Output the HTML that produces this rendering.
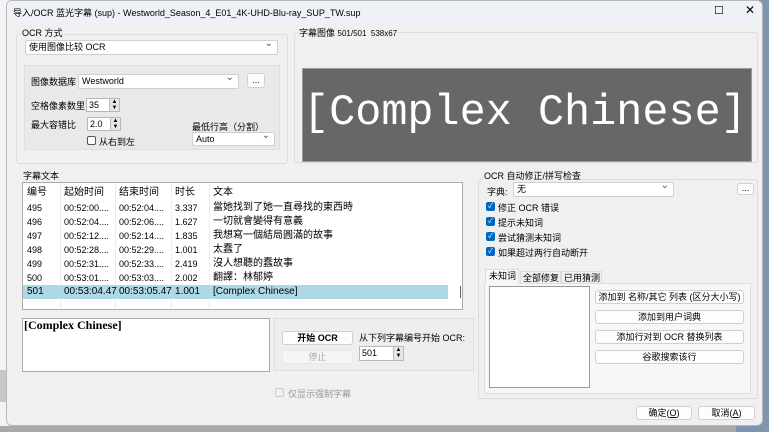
<!DOCTYPE html>
<html><head><meta charset="utf-8"><style>
*{box-sizing:border-box;margin:0;padding:0}
body{width:769px;height:432px;overflow:hidden;position:relative;background:#e9e9e9;font-family:"Liberation Sans","Noto Sans CJK SC",sans-serif;font-size:9px;color:#000}
.a{position:absolute}
.win{left:6px;top:0;width:757px;height:426px;background:#f0f0f0;border:1px solid #b8b8b8;border-radius:6px;overflow:hidden}
.grp{position:absolute;border:1px solid #dcdcdc;border-radius:3px}
.lbl{position:absolute;background:#f0f0f0;padding:0 1px;white-space:nowrap}
.cb{position:absolute;background:#fff;border:1px solid #d0d0d0;border-radius:2px;padding-left:3px;line-height:12px;white-space:nowrap}
.cb:after{content:"⌄";position:absolute;right:4px;top:-3px;color:#555;font-size:10px}
.btn{position:absolute;background:#fdfdfd;border:1px solid #d0d0d0;border-radius:3px;text-align:center;line-height:12px;white-space:nowrap}
.spin{position:absolute;background:#fff;border:1px solid #b8b8b8;padding-left:2px;line-height:12px}
.spin i{position:absolute;right:0;top:0;width:10px;height:100%;background:#e6e6e6;border-left:1px solid #bbb;font-style:normal;font-size:6px;line-height:6px;text-align:center}
.chk{position:absolute;width:9px;height:9px;border-radius:2px;background:#0067c0;color:#fff;font-size:7px;line-height:9px;text-align:center}
.row{position:absolute;left:0;width:425px;height:14px;line-height:14px;white-space:nowrap}
.row span{position:absolute;top:0;overflow:hidden}
.c1{left:4px;width:33px}.c2{left:41px;width:55px}.c3{left:96px;width:56px}.c4{left:152px;width:38px}.c5{left:190px;font-size:10px}
.vl{position:absolute;top:0;width:1px;height:126px;background:#ececec}
</style></head><body>
<div class="a" style="left:0;top:0;width:8px;height:432px;background:#f3f3f3"></div>
<div class="a" style="left:0;top:370px;width:8px;height:32px;background:#c8c8c8"></div>
<div class="a" style="left:0;top:426px;width:769px;height:6px;background:#a9a9a9"></div>
<div class="a" style="left:736px;top:0;width:33px;height:432px;background:#7f94ad"></div>
<div class="win a">
 <div class="a" style="left:0;top:0;width:757px;height:22px;background:#eef1f6"></div>
 <div class="a" style="left:6px;top:5px;font-size:9px;white-space:nowrap">导入/OCR 蓝光字幕 (sup) - Westworld_Season_4_E01_4K-UHD-Blu-ray_SUP_TW.sup</div>
 <div class="a" style="left:707px;top:3px;font-size:11px">☐</div>
 <div class="a" style="left:738px;top:2px;font-size:12px">✕</div>

 <div class="grp" style="left:9px;top:33px;width:272px;height:130px"></div>
 <div class="lbl" style="left:14px;top:25px">OCR 方式</div>
 <div class="cb" style="left:18px;top:39px;width:253px;height:15px">使用图像比较 OCR</div>
 <div class="a" style="left:17px;top:64px;width:256px;height:85px;background:#e9e9e9;border:1px solid #dedede"></div>
 <div class="a" style="left:24px;top:74px">图像数据库</div>
 <div class="cb" style="left:71px;top:73px;width:161px;height:15px">Westworld</div>
 <div class="btn" style="left:240px;top:72px;width:18px;height:15px">...</div>
 <div class="a" style="left:24px;top:98px">空格像素数里</div>
 <div class="spin" style="left:79px;top:97px;width:34px;height:14px">35<i>▲<br>▼</i></div>
 <div class="a" style="left:24px;top:117px">最大容错比</div>
 <div class="spin" style="left:80px;top:116px;width:34px;height:14px">2.0<i>▲<br>▼</i></div>
 <div class="a" style="left:80px;top:135px;width:9px;height:9px;border:1px solid #555;border-radius:2px;background:#fff"></div>
 <div class="a" style="left:92px;top:134px">从右到左</div>
 <div class="a" style="left:185px;top:119px">最低行高（分割）</div>
 <div class="cb" style="left:185px;top:131px;width:83px;height:14px">Auto</div>

 <div class="grp" style="left:287px;top:31px;width:464px;height:131px"></div>
 <div class="lbl" style="left:291px;top:25px">字幕图像 <span style="font-size:8px">501/501 &nbsp;538x67</span></div>
 <div class="a" style="left:295px;top:67px;width:450px;height:94px;background:#676767;border:1px solid #999;color:#fff;font-family:'Liberation Mono','DejaVu Sans Mono',monospace;font-size:43.5px;line-height:90px;white-space:nowrap;padding-left:0">[Complex Chinese]</div>

 <div class="a" style="left:16px;top:168px">字幕文本</div>
 <div class="a" style="left:15px;top:181px;width:441px;height:128px;background:#fff;border:1px solid #aaa;overflow:hidden">
  <div class="vl" style="left:37px"></div><div class="vl" style="left:92px"></div><div class="vl" style="left:148px"></div><div class="vl" style="left:186px"></div>
  <div class="row" style="top:1px;height:17px;line-height:17px;font-size:10px"><span class="c1">编号</span><span class="c2">起始时间</span><span class="c3">结束时间</span><span class="c4">时长</span><span class="c5">文本</span></div>
  <div class="row" style="top:18px"><span class="c1">495</span><span class="c2">00:52:00....</span><span class="c3">00:52:04....</span><span class="c4">3.337</span><span class="c5">當她找到了她一直尋找的東西時</span></div>
  <div class="row" style="top:32px"><span class="c1">496</span><span class="c2">00:52:04....</span><span class="c3">00:52:06....</span><span class="c4">1.627</span><span class="c5">一切就會變得有意義</span></div>
  <div class="row" style="top:46px"><span class="c1">497</span><span class="c2">00:52:12....</span><span class="c3">00:52:14....</span><span class="c4">1.835</span><span class="c5">我想寫一個結局圓滿的故事</span></div>
  <div class="row" style="top:60px"><span class="c1">498</span><span class="c2">00:52:28....</span><span class="c3">00:52:29....</span><span class="c4">1.001</span><span class="c5">太蠢了</span></div>
  <div class="row" style="top:74px"><span class="c1">499</span><span class="c2">00:52:31....</span><span class="c3">00:52:33....</span><span class="c4">2.419</span><span class="c5">沒人想聽的蠢故事</span></div>
  <div class="row" style="top:88px"><span class="c1">500</span><span class="c2">00:53:01....</span><span class="c3">00:53:03....</span><span class="c4">2.002</span><span class="c5">翻譯：林郁婷</span></div>
  <div class="row" style="top:102px;background:#add8e6;font-size:10px"><span class="c1">501</span><span class="c2">00:53:04.47</span><span class="c3">00:53:05.47</span><span class="c4">1.001</span><span class="c5">[Complex Chinese]</span></div>
  <div class="a" style="left:437px;top:103px;width:1px;height:12px;background:#666"></div>
 </div>

 <div class="a" style="left:15px;top:317px;width:248px;height:54px;background:#fff;border:1px solid #aaa;font-family:'Liberation Serif',serif;font-weight:bold;font-size:12px;padding-left:1px;line-height:13px">[Complex Chinese]</div>
 <div class="a" style="left:267px;top:317px;width:200px;height:53px;border:1px solid #ddd;background:#eee"></div>
 <div class="btn" style="left:275px;top:330px;width:71px;height:14px;font-weight:bold">开始 OCR</div>
 <div class="btn" style="left:275px;top:349px;width:71px;height:14px;color:#aaa;background:#f5f5f5;border-color:#e8e8e8">停止</div>
 <div class="a" style="left:352px;top:330px">从下列字幕编号开始 OCR:</div>
 <div class="spin" style="left:352px;top:345px;width:45px;height:15px">501<i>▲<br>▼</i></div>
 <div class="a" style="left:268px;top:387px;width:9px;height:9px;border:1px solid #ccc;border-radius:2px"></div>
 <div class="a" style="left:281px;top:386px;color:#999">仅显示强制字幕</div>

 <div class="grp" style="left:471px;top:178px;width:280px;height:220px"></div>
 <div class="lbl" style="left:476px;top:168px">OCR 自动修正/拼写检查</div>
 <div class="a" style="left:480px;top:184px">字典:</div>
 <div class="cb" style="left:506px;top:181px;width:161px;height:15px">无</div>
 <div class="btn" style="left:730px;top:182px;width:17px;height:12px;line-height:9px">...</div>
 <div class="chk" style="left:479px;top:201px">✓</div><div class="a" style="left:491px;top:200px">修正 OCR 错误</div>
 <div class="chk" style="left:479px;top:216px">✓</div><div class="a" style="left:491px;top:215px">提示未知词</div>
 <div class="chk" style="left:479px;top:231px">✓</div><div class="a" style="left:491px;top:230px">尝试猜测未知词</div>
 <div class="chk" style="left:479px;top:246px">✓</div><div class="a" style="left:491px;top:245px">如果超过两行自动断开</div>
 <div class="a" style="left:477px;top:282px;width:267px;height:111px;background:#f7f7f7;border:1px solid #ddd"></div>
 <div class="a" style="left:478px;top:268px;width:34px;height:15px;background:#f7f7f7;border:1px solid #ddd;border-bottom:none;padding-left:3px;line-height:13px">未知词</div>
 <div class="a" style="left:513px;top:270px;width:41px;height:13px;border:1px solid #ddd;background:#f0f0f0;padding-left:2px;line-height:12px">全部修复</div>
 <div class="a" style="left:554px;top:270px;width:41px;height:13px;border:1px solid #ddd;background:#f0f0f0;padding-left:2px;line-height:12px">已用猜测</div>
 <div class="a" style="left:482px;top:285px;width:101px;height:102px;background:#fff;border:1px solid #999"></div>
 <div class="btn" style="left:588px;top:289px;width:149px;height:14px">添加到 名称/其它 列表 (区分大小写)</div>
 <div class="btn" style="left:588px;top:309px;width:149px;height:14px">添加到用户词典</div>
 <div class="btn" style="left:588px;top:329px;width:149px;height:14px">添加行对到 OCR 替换列表</div>
 <div class="btn" style="left:588px;top:349px;width:149px;height:14px">谷歌搜索该行</div>

 <div class="btn" style="left:629px;top:405px;width:56px;height:14px">确定(<u>O</u>)</div>
 <div class="btn" style="left:691px;top:405px;width:57px;height:14px">取消(<u>A</u>)</div>
</div>
</body></html>
